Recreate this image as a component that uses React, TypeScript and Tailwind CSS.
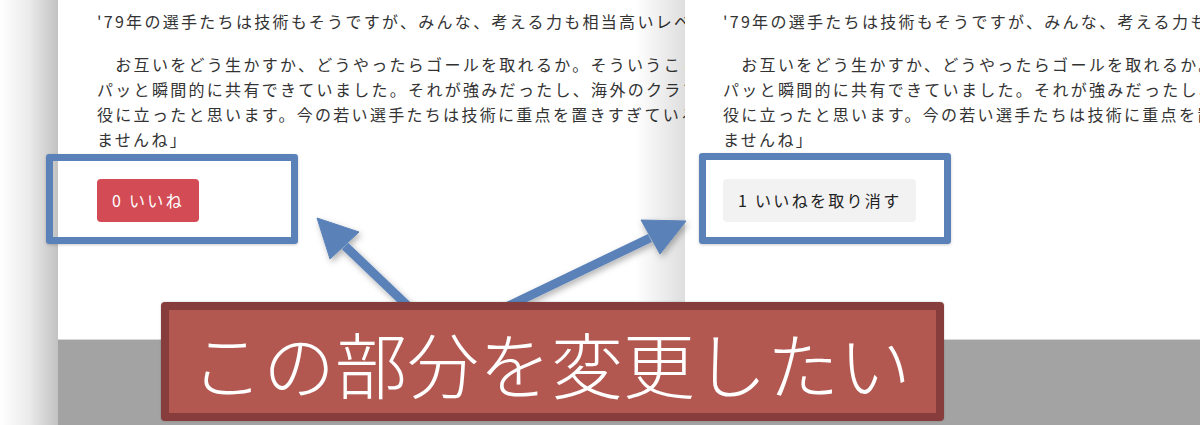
const jp = { fontFamily: '"Noto Sans CJK JP", "Noto Sans", sans-serif' };

function Article({ liked }: { liked: boolean }) {
  return (
    <div className="pt-[9px] text-[16px] leading-[25px] tracking-[2.3px] text-[#333] whitespace-pre">
      <p>'79年の選手たちは技術もそうですが、みんな、考える力も相当高いレベルでした。</p>
      <p className="mt-[18px]">
        {"　お互いをどう生かすか、どうやったらゴールを取れるか。そういうことを"}
        <br />
        パッと瞬間的に共有できていました。それが強みだったし、海外のクラブでも
        <br />
        役に立ったと思います。今の若い選手たちは技術に重点を置きすぎているかもし
        <br />
        ませんね」
      </p>
      <div className="mt-[27px] flex">
        {liked ? (
          <button className="h-[43px] px-[15px] rounded-[4px] bg-[#f2f2f2] text-[#222]">
            1 いいねを取り消す
          </button>
        ) : (
          <button className="h-[43px] px-[15px] rounded-[4px] bg-[#d34b54] text-white">
            0 いいね
          </button>
        )}
      </div>
    </div>
  );
}

export default function App() {
  return (
    <div className="relative w-[1200px] h-[425px] overflow-hidden flex bg-white" style={jp}>
      {/* page edge shadow */}
      <div className="w-[58px] h-full shrink-0 bg-gradient-to-r from-white via-[#ebebeb] to-[#c2c2c2]" />

      <div className="flex-1 flex flex-col">
        <div className="h-[340px] flex border-b border-[#d8d8d8]">
          <div className="relative w-[627px] shrink-0 overflow-hidden bg-white pl-[39px]">
            <Article liked={false} />
            <div className="absolute inset-y-0 right-0 w-[50px] bg-gradient-to-r from-transparent to-[rgba(0,0,0,0.13)]" />
          </div>
          <div className="flex-1 overflow-hidden bg-white pl-[38px]">
            <Article liked />
          </div>
        </div>
        <div className="flex-1 bg-[#a3a3a3]" />
      </div>

      {/* annotation boxes */}
      <div className="absolute left-[46px] top-[154px] w-[252px] h-[90px] border-[7px] border-[#5a82b9] rounded-[3px] shadow-[0_1px_3px_rgba(0,0,0,0.2)]" />
      <div className="absolute left-[699px] top-[153px] w-[252px] h-[91px] border-[7px] border-[#5a82b9] rounded-[3px] shadow-[0_1px_3px_rgba(0,0,0,0.2)]" />

      {/* arrows */}
      <svg className="absolute inset-0" width="1200" height="425" viewBox="0 0 1200 425">
        <defs>
          <filter id="sh" x="-20%" y="-20%" width="140%" height="140%">
            <feDropShadow dx="2" dy="3" stdDeviation="3" floodColor="#000" floodOpacity="0.3" />
          </filter>
        </defs>
        <g filter="url(#sh)" fill="#5a82b9" stroke="#5a82b9">
          <line x1="345" y1="246" x2="412" y2="310" strokeWidth="9" />
          <polygon points="317,218 359,232 330,259" strokeWidth="1" />
          <line x1="650" y1="238" x2="500" y2="310" strokeWidth="9" />
          <polygon points="686,221 641,220 660,254" strokeWidth="1" />
        </g>
      </svg>

      {/* label */}
      <div className="absolute left-[161px] top-[302px] w-[783px] h-[119px] rounded-[4px] border-[8px] border-[#873d3c] bg-[#b25850] flex items-center pl-[22px] shadow-[0_0_2px_rgba(0,0,0,0.25)]">
        <span className="text-[72px] leading-none font-light text-white whitespace-nowrap">この部分を変更したい</span>
      </div>
    </div>
  );
}
